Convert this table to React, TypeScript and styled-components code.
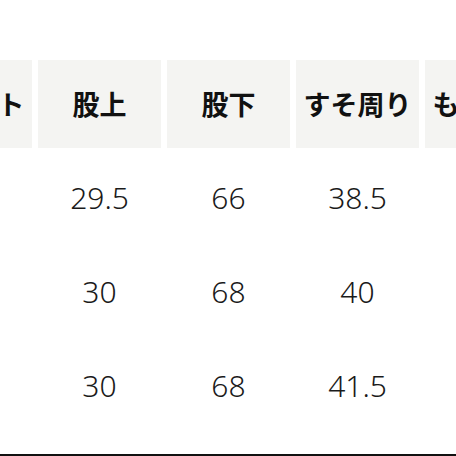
import React from "react";
import styled, { createGlobalStyle } from "styled-components";

const Global = createGlobalStyle`
  html, body { margin: 0; padding: 0; background: #ffffff; }
  body { font-family: "Noto Sans CJK JP", "Noto Sans", sans-serif; }
`;

const Frame = styled.div`
  width: 456px;
  height: 456px;
  overflow: hidden;
  box-sizing: border-box;
  border-bottom: 2px solid #111;
  background: #fff;
`;

const Table = styled.div`
  margin-left: -91px;
  padding-top: 60px;
  display: grid;
  grid-template-columns: repeat(5, 123px);
  column-gap: 6px;
  width: max-content;
`;

const HeadCell = styled.div`
  height: 88px;
  margin-bottom: 6px;
  background: #f4f4f2;
  display: flex;
  align-items: center;
  justify-content: center;
  font-size: 27px;
  font-weight: 700;
  color: #111;
  white-space: nowrap;
  line-height: 1;
  padding-bottom: 1px;
  box-sizing: border-box;
`;

const Cell = styled.div`
  height: 94px;
  display: flex;
  align-items: center;
  justify-content: center;
  font-family: "Noto Sans", "Noto Sans CJK JP", sans-serif;
  font-size: 30px;
  font-weight: 300;
  color: #1a1a1a;
  white-space: nowrap;
  line-height: 1;
  padding-bottom: 6px;
  box-sizing: border-box;
`;

const headers = ["ウエスト", "股上", "股下", "すそ周り", "もも周り"];
const rows = [
  ["", "29.5", "66", "38.5", ""],
  ["", "30", "68", "40", ""],
  ["", "30", "68", "41.5", ""],
];

export default function App() {
  return (
    <>
      <Global />
      <Frame>
        <Table>
          {headers.map((h) => (
            <HeadCell key={h}>{h}</HeadCell>
          ))}
          {rows.map((r, i) =>
            r.map((v, j) => <Cell key={`${i}-${j}`}>{v}</Cell>)
          )}
        </Table>
      </Frame>
    </>
  );
}
